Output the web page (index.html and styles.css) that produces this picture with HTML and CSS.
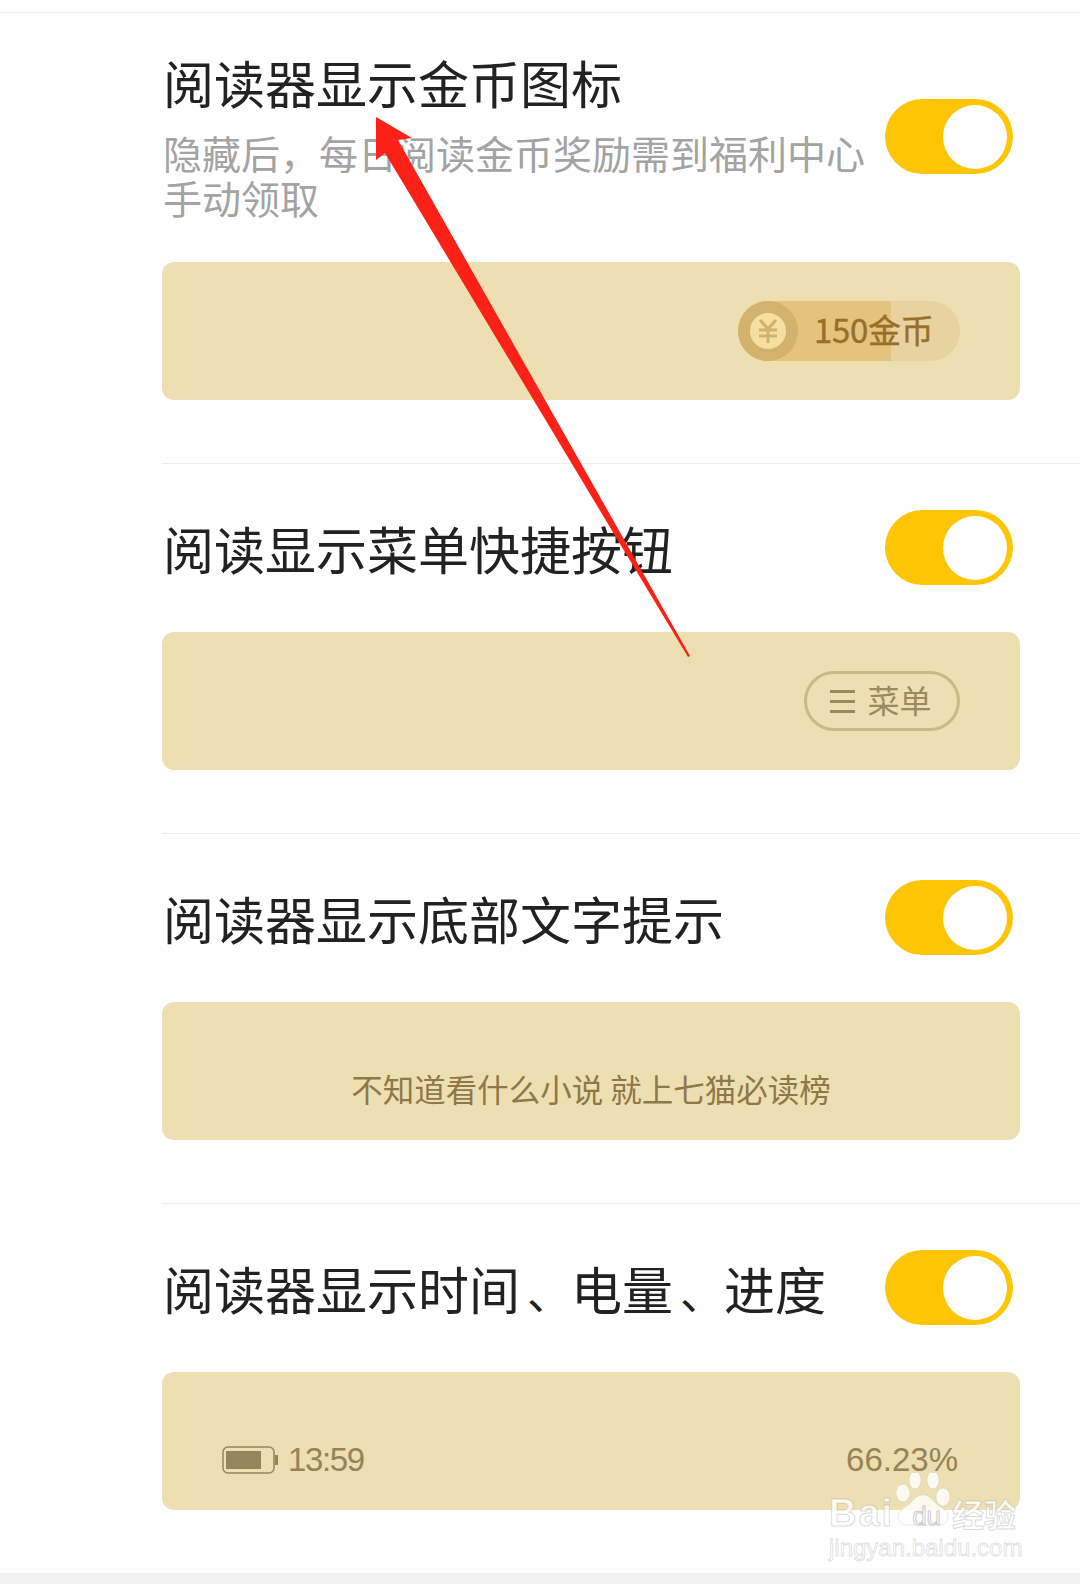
FILE: index.html
```html
<!DOCTYPE html>
<html lang="en">
<head>
<meta charset="UTF-8">
<meta name="viewport" content="width=device-width, initial-scale=1.0">
<title>阅读设置</title>
<link rel="stylesheet" href="styles.css">
</head>
<body>

<div class="list">

  <div class="row row-first">
    <div class="row-head">
      <div class="row-text">
        <div class="title">阅读器显示金币图标</div>
        <div class="desc">隐藏后，每日阅读金币奖励需到福利中心手动领取</div>
      </div>
      <div class="toggle"><span class="thumb"></span></div>
    </div>
    <div class="panel panel-coin">
      <div class="coin-pill">
        <span class="coin">
          <span class="coin-inner">
            <svg width="22" height="24" viewBox="0 0 22 24" fill="none" stroke="#d2b26c" stroke-width="3">
              <path d="M3 1l8 9 8-9M2 11h18M2 17h18M11 10v14"/>
            </svg>
          </span>
        </span>
        <span class="coin-text">150金币</span>
      </div>
    </div>
  </div>

  <div class="row">
    <div class="row-head">
      <div class="row-text"><div class="title">阅读显示菜单快捷按钮</div></div>
      <div class="toggle"><span class="thumb"></span></div>
    </div>
    <div class="panel panel-menu">
      <div class="menu-pill">
        <span class="menu-icon"><i></i><i></i><i></i></span>
        <span>菜单</span>
      </div>
    </div>
  </div>

  <div class="row">
    <div class="row-head">
      <div class="row-text"><div class="title">阅读器显示底部文字提示</div></div>
      <div class="toggle"><span class="thumb"></span></div>
    </div>
    <div class="panel panel-tip">不知道看什么小说 就上七猫必读榜</div>
  </div>

  <div class="row">
    <div class="row-head">
      <div class="row-text"><div class="title">阅读器显示时间<span class="dun">、</span>电量<span class="dun">、</span>进度</div></div>
      <div class="toggle"><span class="thumb"></span></div>
    </div>
    <div class="panel panel-status">
      <div class="status-left">
        <svg class="battery" width="56" height="28" viewBox="0 0 56 28">
          <rect x="1" y="1" width="51" height="26" rx="5" fill="none" stroke="#96855c" stroke-width="1.5"/>
          <rect x="4" y="5" width="35" height="18" fill="#96855c"/>
          <rect x="53" y="9" width="3" height="10" fill="#96855c"/>
        </svg>
        <span class="time">13:59</span>
      </div>
      <span>66.23%</span>
    </div>
  </div>

</div>

<div class="footer-bar"></div>

<!-- red arrow drawn on top of the screenshot -->
<svg class="arrow" width="1080" height="1584" viewBox="0 0 1080 1584">
  <polygon points="376,117 412,138 398,140 690,656 688,657 385,153 376,160" fill="#fb2116"/>
</svg>

<!-- watermark -->
<div class="mark">
  <svg class="paw" width="60" height="56" viewBox="0 0 60 56">
    <g fill="#fff" fill-opacity="0.82" stroke="#bbb" stroke-opacity="0.3">
      <ellipse cx="9" cy="20" rx="7" ry="9"/>
      <ellipse cx="21" cy="7" rx="6" ry="9"/>
      <ellipse cx="39" cy="7" rx="6" ry="9"/>
      <ellipse cx="49" cy="24" rx="7" ry="9"/>
      <path d="M29 22c-7 0-10 6-15 10-6 4-10 7-10 12 0 6 5 8 11 8h29c6 0 10-3 10-8 0-5-4-8-10-12-5-4-8-10-15-10z"/>
    </g>
  </svg>
  <div class="mark-top"><span class="mark-bai">Bai</span><span class="mark-du">du</span><span class="mark-cn">经验</span></div>
  <div class="mark-url">jingyan.baidu.com</div>
</div>

</body>
</html>
```

FILE: styles.css
```css
body {
  margin: 0;
  background-color: #ffffff;
  font-family: "Noto Sans CJK SC", "Noto Sans", sans-serif;
  color: #222222;
  position: relative;
  height: 1584px;
  overflow: hidden;
}

.list {
  padding-top: 12px;
  height: 1561px;
  display: flex;
  flex-direction: column;
}

.row {
  height: 370px;
  box-sizing: border-box;
  margin-left: 162px;
  border-top: 1px solid #ececec;
  padding-right: 60px;
}

.row-first {
  height: 451px;
  margin-left: 0;
  padding-left: 162px;
}

.row-head {
  display: flex;
  justify-content: space-between;
  height: 168px;
  padding-top: 46px;
  box-sizing: border-box;
}

.row-first .row-head {
  height: 249px;
  padding-top: 38px;
}

.row-text {
  width: 706px;
}

.title {
  font-size: 51px;
  line-height: 62px;
  margin-top: 7px;
  margin-left: 1px;
  color: #222222;
}

/* the pause mark sits further into its cell in the original */
.dun {
  font-size: 44px;
  margin-left: 7px;
}

.desc {
  font-size: 39px;
  line-height: 45px;
  margin-top: 17px;
  margin-left: 1px;
  color: #a3a3a3;
}

.row-first .title {
  margin-top: 0;
}

.toggle {
  width: 128px;
  height: 75px;
  margin-right: 7px;
  border-radius: 38px;
  background-color: #fdc505;
  display: flex;
  align-items: center;
  justify-content: flex-end;
  padding-right: 6px;
  box-sizing: border-box;
}

.row-first .toggle {
  margin-top: 48px;
}

.thumb {
  width: 64px;
  height: 64px;
  border-radius: 50%;
  background-color: #ffffff;
}

.panel {
  height: 138px;
  border-radius: 12px;
  background-color: #eddfb2;
  box-sizing: border-box;
  display: flex;
}

.panel-coin {
  justify-content: flex-end;
  align-items: center;
  padding-right: 60px;
}

.coin-pill {
  width: 222px;
  height: 60px;
  border-radius: 30px;
  background: linear-gradient(to right, #e4c47d 0, #e4c47d 153px, #e8d2a0 153px);
  display: flex;
  align-items: center;
}

.coin {
  width: 60px;
  height: 60px;
  border-radius: 50%;
  background-color: #d2b26c;
  display: flex;
  align-items: center;
  justify-content: center;
}

.coin-inner {
  width: 36px;
  height: 36px;
  border-radius: 50%;
  background-color: #f7dfa2;
  display: flex;
  align-items: center;
  justify-content: center;
}

.coin-text {
  margin-left: 16px;
  margin-top: -4px;
  font-size: 33px;
  line-height: 44px;
  letter-spacing: -0.3px;
  color: #96702a;
  -webkit-text-stroke: 0.4px #96702a;
}

.panel-menu {
  justify-content: flex-end;
  align-items: center;
  padding-right: 60px;
}

.menu-pill {
  width: 156px;
  height: 60px;
  box-sizing: border-box;
  border: 3px solid #c9b985;
  border-radius: 30px;
  display: flex;
  align-items: center;
  justify-content: center;
  gap: 12px;
  padding-right: 2px;
  font-size: 32px;
  line-height: 40px;
  color: #9c8a5c;
}

.menu-pill span:last-child {
  margin-top: -4px;
}

.menu-icon {
  display: flex;
  flex-direction: column;
  gap: 7px;
  width: 25px;
}

.menu-icon i {
  display: block;
  height: 3px;
  background-color: #9c8a5c;
}

.panel-tip {
  justify-content: center;
  align-items: flex-end;
  padding-bottom: 28px;
  font-size: 31.5px;
  line-height: 48px;
  color: #8f7848;
}

.panel-status {
  justify-content: space-between;
  align-items: center;
  padding: 38px 62px 0 60px;
  font-family: "Liberation Sans", Arial, sans-serif;
  font-size: 33px;
  color: #958458;
}

.status-left {
  display: flex;
  align-items: center;
  gap: 10px;
}

.time {
  letter-spacing: -1.4px;
}

.footer-bar {
  height: 11px;
  background-color: #f2f2f2;
}

.arrow {
  position: absolute;
  left: 0;
  top: 0;
}

.mark {
  position: absolute;
  left: 826px;
  top: 1465px;
  width: 200px;
  height: 100px;
  font-family: "Liberation Sans", Arial, sans-serif;
}

.paw {
  position: absolute;
  left: 68px;
  top: 8px;
}

.mark-top {
  position: absolute;
  left: 3px;
  top: 23px;
  display: flex;
  align-items: center;
  white-space: nowrap;
  font-size: 38px;
  font-weight: 700;
  letter-spacing: 2px;
  line-height: 44px;
  color: rgba(255, 255, 255, 0.8);
  -webkit-text-stroke: 1px rgba(150, 150, 150, 0.35);
}

.mark-du {
  font-size: 26px;
  font-weight: 400;
  letter-spacing: 0;
  margin-left: 18px;
  margin-top: 6px;
  color: rgba(255, 255, 255, 0.4);
  -webkit-text-stroke: 1px rgba(130, 130, 130, 0.45);
}

.mark-cn {
  margin-left: 11px;
  font-family: "Noto Sans CJK SC", sans-serif;
  font-size: 32px;
  letter-spacing: 0;
}

.mark-url {
  position: absolute;
  left: 3px;
  top: 69px;
  white-space: nowrap;
  font-size: 24px;
  line-height: 28px;
  color: rgba(255, 255, 255, 0.8);
  -webkit-text-stroke: 1px rgba(150, 150, 150, 0.3);
}
```
